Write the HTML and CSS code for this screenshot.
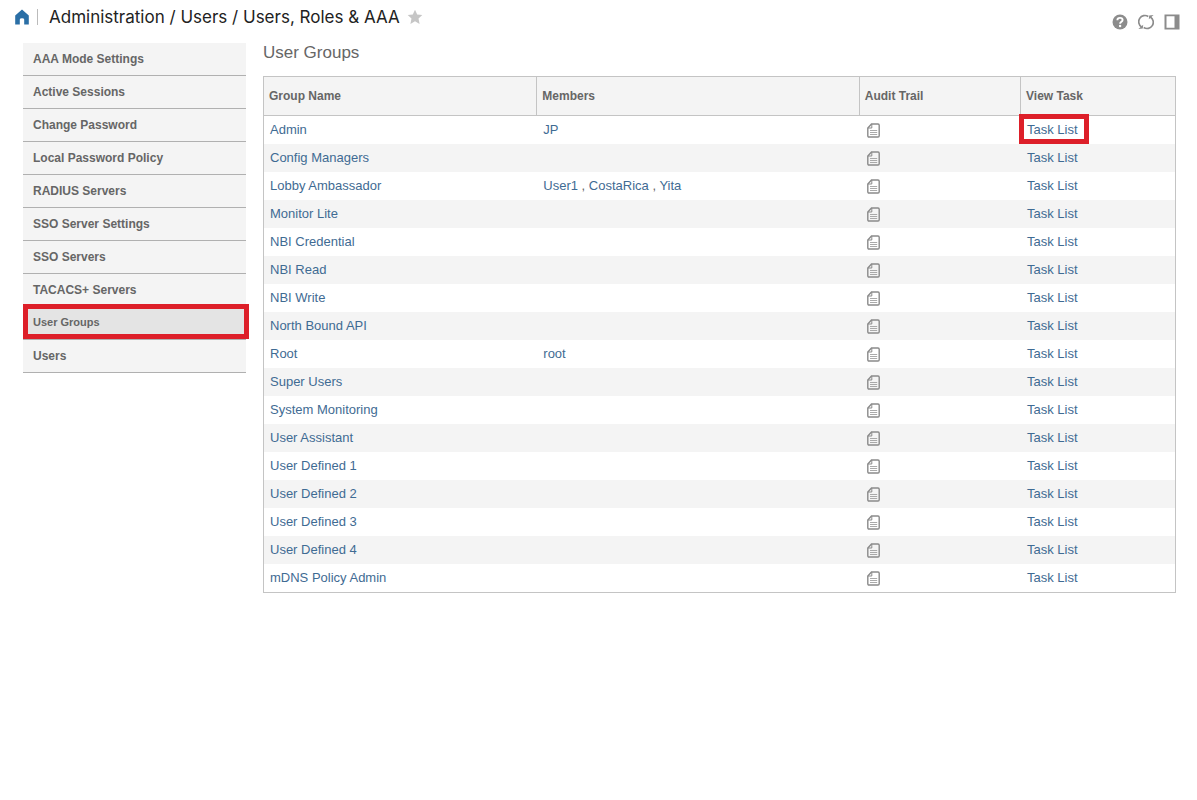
FILE: index.html
```html
<!DOCTYPE html>
<html lang="en">
<head>
<meta charset="utf-8">
<title>Users, Roles &amp; AAA</title>
<link rel="stylesheet" href="styles.css">
</head>
<body>
<svg class="sprite" aria-hidden="true">
  <symbol id="doc" viewBox="0 0 13 15">
    <path d="M4.500 1H11q1.200 0 1.200 1.200v10.600q0 1.200-1.200 1.200H2q-1.200 0-1.200-1.200V5z" fill="none" stroke="#8a8a8a" stroke-width="1.400"/>
    <path d="M4.800 1v4H1" fill="none" stroke="#8a8a8a"/>
    <path d="M3 7.500h7.200M3 9.500h7.200M3 11.500h7.200" stroke="#a0a0a0" stroke-width="0.900"/>
  </symbol>
</svg>
<header class="topbar">
  <a class="home" href="#" aria-label="Home"><svg width="14" height="16" viewBox="0 0 14 16"><path d="M7 .5L13.800 6.500V15.500H9.200V10.500Q9.200 9.300 7 9.300T4.800 10.500V15.500H.2V6.500z" fill="#2b6fa6"/></svg></a>
  <span class="divider"></span>
  <h1 class="crumbs">Administration / Users / Users, Roles &amp; AAA</h1>
  <button class="icon star" aria-label="Add to favorites"><svg width="16" height="16" viewBox="0 0 16 16"><path d="M8 .8L10.200 5.500 15.300 6.100 11.500 9.600 12.600 14.900 8 12.200 3.400 14.900 4.500 9.600.7 6.100 5.800 5.500z" fill="#c6c6c6"/></svg></button>
  <div class="tools">
    <button class="icon" aria-label="Help"><svg width="16" height="16" viewBox="0 0 16 16"><circle cx="8" cy="8" r="7.500" fill="#8c8c8c"/><path d="M5.400 6.200Q5.400 3.900 8 3.900T10.600 6.100Q10.600 7.200 9.300 7.900 8.100 8.600 8.100 9.800" fill="none" stroke="#fff" stroke-width="1.900"/><circle cx="8.100" cy="12" r="1.200" fill="#fff"/></svg></button>
    <button class="icon" aria-label="Refresh"><svg width="16" height="16" viewBox="0 0 16 16"><path d="M3.600 13A6 6 0 0 1 10.300 2.500M12.400 3A6 6 0 0 1 5.700 13.500" fill="none" stroke="#8c8c8c" stroke-width="1.700"/><path d="M10.800 5.200L11.200 1.500 15.600 1zM5.200 10.800L4.800 14.500.4 15z" fill="#8c8c8c"/></svg></button>
    <button class="icon" aria-label="Toggle side panel"><svg width="16" height="16" viewBox="0 0 16 16"><path d="M.5.500h15v15H.5zM2.500 2.300v11.400h8V2.300z" fill="#8c8c8c" fill-rule="evenodd"/></svg></button>
  </div>
</header>
<div class="layout">
  <nav class="sidebar" aria-label="Users">
    <a href="#">AAA Mode Settings</a>
    <a href="#">Active Sessions</a>
    <a href="#">Change Password</a>
    <a href="#">Local Password Policy</a>
    <a href="#">RADIUS Servers</a>
    <a href="#">SSO Server Settings</a>
    <a href="#">SSO Servers</a>
    <a href="#">TACACS+ Servers</a>
    <a href="#" class="active" aria-current="page">User Groups</a>
    <a href="#">Users</a>
  </nav>
  <main class="content">
    <h2 class="title">User Groups</h2>
    <table class="groups">
      <colgroup><col class="c-name"><col class="c-members"><col class="c-audit"><col></colgroup>
      <thead><tr><th>Group Name</th><th>Members</th><th>Audit Trail</th><th>View Task</th></tr></thead>
      <tbody id="rows"></tbody>
    </table>
  </main>
</div>
<script src="groups.js"></script>
</body>
</html>
```
FILE: styles.css
```css
* { box-sizing: border-box; }
body {
  margin: 0;
  background: #fff;
  color: #666;
  font: 13px/20px "Liberation Sans", Arial, sans-serif;
}
a { color: #3f6b93; text-decoration: none; }
.sprite { display: none; }
.icon { display: flex; padding: 0; border: 0; background: none; cursor: pointer; }
.topbar { display: flex; align-items: center; height: 34px; padding: 0 17px 0 15px; }
.home { display: flex; }
.divider { width: 1px; height: 16px; margin: 0 11px 0 8px; background: #bbb; }
.crumbs {
  margin: 0;
  color: #222;
  font: 400 17px/34px Inter, "Liberation Sans", sans-serif;
  white-space: nowrap;
}
.star { margin-left: 7px; }
.tools { display: flex; gap: 10px; margin-left: auto; padding-top: 10px; }
.layout { display: flex; align-items: flex-start; gap: 17px; padding: 9px 21px 24px 23px; }
.sidebar { flex: 0 0 223px; }
.sidebar a {
  display: block;
  height: 33px;
  padding: 0 10px;
  border-bottom: 1px solid #b0b0b0;
  background: #f4f4f4;
  color: #666;
  font-size: 12px;
  font-weight: 700;
  line-height: 33px;
}
.sidebar .active { position: relative; background: #e4e4e4; font-size: 11px; line-height: 30px; }
.active::after, .marked::after {
  content: "";
  position: absolute;
  border: 5px solid #dd1f29;
  pointer-events: none;
}
.active::after { inset: -3px -3px 0 0; }
.content { flex: 1; min-width: 0; }
.title { margin: 0 0 13px; font-size: 17px; font-weight: 400; }
.groups {
  width: 100%;
  border: 1px solid #c4c4c4;
  border-spacing: 0;
  table-layout: fixed;
}
.c-name { width: 30%; }
.c-members { width: 35.400%; }
.c-audit { width: 17.700%; }
th {
  height: 39px;
  padding: 0 5px;
  border-right: 1px solid #c4c4c4;
  border-bottom: 1px solid #c4c4c4;
  background: #f4f4f4;
  font-size: 12px;
  text-align: left;
}
th:last-child { border-right: 0; }
td { height: 28px; padding: 0 6px; }
tbody tr:nth-child(even) { background: #f4f4f4; }
.audit { display: flex; padding-left: 1px; }
.doc { width: 13px; height: 15px; }
.marked { position: relative; }
.marked::after { inset: -8px -11px -7px -8px; }
```
FILE: groups.js
```js
const groups = [
  ["Admin", ["JP"]],
  ["Config Managers", []],
  ["Lobby Ambassador", ["User1", "CostaRica", "Yita"]],
  ["Monitor Lite", []],
  ["NBI Credential", []],
  ["NBI Read", []],
  ["NBI Write", []],
  ["North Bound API", []],
  ["Root", ["root"]],
  ["Super Users", []],
  ["System Monitoring", []],
  ["User Assistant", []],
  ["User Defined 1", []],
  ["User Defined 2", []],
  ["User Defined 3", []],
  ["User Defined 4", []],
  ["mDNS Policy Admin", []]
];
const link = (text) => `<a href="#">${text}</a>`;
document.getElementById("rows").innerHTML = groups.map(([name, members], i) => `
  <tr>
    <td>${link(name)}</td>
    <td>${members.map(link).join(" , ")}</td>
    <td><a class="audit" href="#" aria-label="Audit trail for ${name}"><svg class="doc"><use href="#doc"/></svg></a></td>
    <td><a href="#"${i === 0 ? ' class="marked"' : ""}>Task List</a></td>
  </tr>`).join("");
```
